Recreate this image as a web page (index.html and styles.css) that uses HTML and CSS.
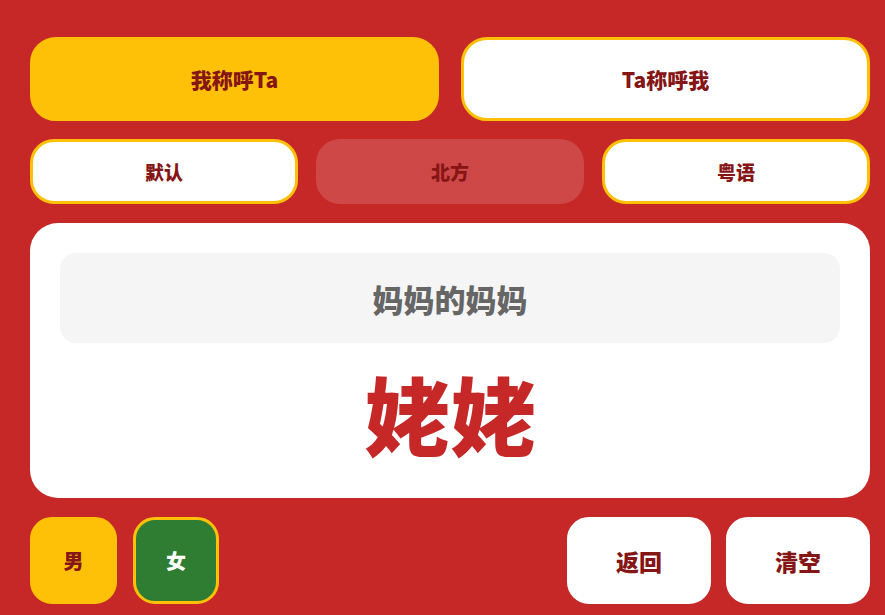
FILE: index.html
```html
<!DOCTYPE html>
<html lang="zh-CN">
<head>
<meta charset="utf-8">
<title>亲戚称呼计算器</title>
<link rel="stylesheet" href="styles.css">
</head>
<body>
<main class="app">
  <div class="row row-mode">
    <button class="btn mode active">我称呼Ta</button>
    <button class="btn mode">Ta称呼我</button>
  </div>
  <div class="row row-dialect">
    <button class="btn dialect">默认</button>
    <button class="btn dialect ghost">北方</button>
    <button class="btn dialect">粤语</button>
  </div>
  <section class="card">
    <div class="query">妈妈的妈妈</div>
    <div class="result">姥姥</div>
  </section>
  <div class="row row-keys">
    <button class="btn key male">男</button>
    <button class="btn key female">女</button>
    <div class="spacer"></div>
    <button class="btn action">返回</button>
    <button class="btn action">清空</button>
  </div>
</main>
</body>
</html>
```
FILE: styles.css
```css
* { box-sizing: border-box; }
html, body {
  margin: 0;
  padding: 0;
  background: #c62828;
}
body {
  font-family: "Noto Sans CJK SC", "Noto Sans", sans-serif;
  overflow: hidden;
}
.app {
  width: 885px;
  padding: 37px 15px 0 30px;
  display: flex;
  flex-direction: column;
}
.btn {
  font-family: inherit;
  font-weight: 800;
  color: #861515;
  background: #ffffff;
  border: 3px solid #ffc107;
  display: flex;
  align-items: center;
  justify-content: center;
  padding: 0;
  cursor: pointer;
}
.row { display: flex; }
.row-mode { gap: 22px; height: 84px; }
.mode {
  flex: 1;
  font-size: 21px;
  border-radius: 26px;
}
.mode.active {
  background: #ffc107;
}
.row-dialect {
  gap: 18px;
  height: 65px;
  margin-top: 18px;
}
.dialect {
  flex: 1;
  font-size: 19px;
  border-radius: 24px;
}
.dialect.ghost {
  background: rgba(255, 255, 255, 0.15);
  border-color: transparent;
}
.card {
  margin-top: 19px;
  height: 275px;
  background: #ffffff;
  border-radius: 28px;
  padding: 30px;
  display: flex;
  flex-direction: column;
}
.query {
  height: 90px;
  background: #f5f5f5;
  border-radius: 16px;
  display: flex;
  align-items: center;
  justify-content: center;
  font-size: 31px;
  font-weight: 800;
  color: #666666;
}
.result {
  flex: 1;
  display: flex;
  align-items: center;
  justify-content: center;
  padding-top: 14px;
  font-size: 86px;
  font-weight: 800;
  color: #c62828;
  line-height: 1;
}
.row-keys {
  margin-top: 19px;
  height: 87px;
  align-items: stretch;
}
.key {
  width: 87px;
  font-size: 20px;
  border-radius: 22px;
}
.male {
  background: #ffc107;
  margin-right: 16px;
}
.female {
  background: #2e7d32;
  color: #ffffff;
  width: 86px;
}
.spacer { flex: 1; }
.action {
  width: 144px;
  font-size: 23px;
  border-radius: 22px;
  border-color: #ffffff;
}
.action + .action { margin-left: 15px; }
```
